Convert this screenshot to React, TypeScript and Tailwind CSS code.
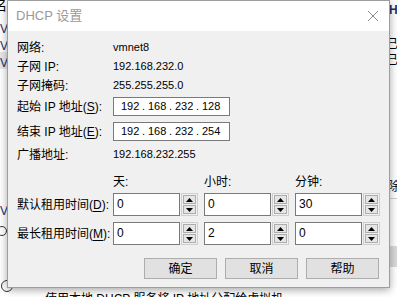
import React from "react";

const FONT = { fontFamily: '"Liberation Sans", "Noto Sans CJK SC", sans-serif' };

function U({ c }: { c: string }) {
  return <span className="underline underline-offset-2">{c}</span>;
}

function Spin({ value }: { value: string }) {
  return (
    <div className="flex h-full w-[85px] gap-[1px]">
      <div className="flex h-full flex-1 items-start border border-[#7a7a7a] bg-white pl-[3px] pt-[3px] text-[12px] leading-[14px]">
        {value}
      </div>
      <div className="flex h-full w-[17px] flex-col gap-[1px] border border-[#cfcfcf] p-[1px]">
        <div className="flex flex-1 items-center justify-center border border-[#adadad] bg-[#e5e5e5]">
          <svg width="7" height="4" viewBox="0 0 7 4">
            <polygon points="0,4 7,4 3.5,0" fill="#000" />
          </svg>
        </div>
        <div className="flex flex-1 items-center justify-center border border-[#adadad] bg-[#e5e5e5]">
          <svg width="7" height="4" viewBox="0 0 7 4">
            <polygon points="0,0 7,0 3.5,4" fill="#000" />
          </svg>
        </div>
      </div>
    </div>
  );
}

function IpBox({ parts }: { parts: string[] }) {
  return (
    <div className="flex h-[19px] w-[117px] items-center border border-[#7a7a7a] bg-white pl-[7px] text-[11px]">
      {parts.map((p, i) => (
        <React.Fragment key={i}>
          <span className="w-[18px]">{p}</span>
          {i < 3 && <span className="w-[9px] text-center">.</span>}
        </React.Fragment>
      ))}
    </div>
  );
}

function Btn({ label }: { label: string }) {
  return (
    <div className="flex h-[21px] w-[73px] items-center justify-center border border-[#adadad] bg-[#e1e1e1] text-[12px]">
      {label}
    </div>
  );
}

export default function App() {
  return (
    <div className="relative h-[297px] w-[397px] overflow-hidden bg-white text-black" style={FONT}>
      {/* background window fragments */}
      <div className="absolute left-0 top-[52px] h-[17px] w-[8px] bg-[#e8e8e8]" />
      <div className="absolute left-[-6px] top-[-4px] text-[13px]">名</div>
      <div className="absolute left-0 top-[20px] text-[12px] text-[#1b2f6b]">V</div>
      <div className="absolute left-0 top-[37px] text-[12px] text-[#1b2f6b]">V</div>
      <div className="absolute left-0 top-[54px] text-[12px] text-[#1b2f6b]">V</div>
      <div className="absolute left-0 top-[202px] text-[12px] text-[#1b2f6b]">V</div>
      <div className="absolute left-[-3px] top-[226px] h-[10px] w-[10px] rounded-full border border-[#333]" />
      <div className="absolute left-[1px] top-[280px] h-[12px] w-[12px] rounded-full border border-[#333]" />
      <div className="absolute left-[45px] top-[290px] whitespace-nowrap text-[12px]">使用本地 DHCP 服务将 IP 地址分配给虚拟机</div>
      <div className="absolute left-[389px] top-[1px] text-[12px] font-bold text-[#1b2f6b]">H</div>
      <div className="absolute left-[386px] top-[35px] text-[12px]">已/</div>
      <div className="absolute left-[386px] top-[51px] text-[12px]">已/</div>
      <div className="absolute left-[388px] top-[178px] h-[21px] w-[12px] border-b border-[#cfcfcf] text-[12px]">除</div>
      <div className="absolute left-[388px] top-[246px] h-[21px] w-[12px] bg-[#dadada]" />

      {/* dialog */}
      <div className="absolute left-[7px] top-0 flex h-[288px] w-[383px] flex-col border border-[#9d9d9d] bg-[#f0f0f0] shadow-[0_2px_8px_rgba(0,0,0,0.35)]">
        <div className="flex h-[30px] items-center justify-between bg-white pl-[8px] pr-[9px]">
          <span className="text-[13px] text-[#9a9a9a]">DHCP 设置</span>
          <svg width="12" height="12" viewBox="0 0 12 12" className="mr-[1px]">
            <path d="M1 1 L11 11 M11 1 L1 11" stroke="#8a8a8a" strokeWidth="1" />
          </svg>
        </div>

        <div className="flex flex-col pl-[9px] pr-[9px] pt-[7px] text-[12px]">
          <div className="flex h-[19px] items-center">
            <span className="w-[96px]">网络:</span>
            <span className="text-[11px]">vmnet8</span>
          </div>
          <div className="flex h-[19px] items-center">
            <span className="w-[96px]">子网 IP:</span>
            <span className="text-[11px]">192.168.232.0</span>
          </div>
          <div className="flex h-[19px] items-center">
            <span className="w-[96px]">子网掩码:</span>
            <span className="text-[11px]">255.255.255.0</span>
          </div>
          <div className="mt-[2px] flex h-[19px] items-center">
            <span className="w-[96px]">
              起始 IP 地址(<U c="S" />):
            </span>
            <IpBox parts={["192", "168", "232", "128"]} />
          </div>
          <div className="mt-[6px] flex h-[19px] items-center">
            <span className="w-[96px]">
              结束 IP 地址(<U c="E" />):
            </span>
            <IpBox parts={["192", "168", "232", "254"]} />
          </div>
          <div className="mt-[4px] flex h-[19px] items-center">
            <span className="w-[96px]">广播地址:</span>
            <span className="text-[11px]">192.168.232.255</span>
          </div>
          <div className="mt-[9px] flex h-[18px] items-center">
            <span className="w-[96px]" />
            <div className="flex gap-[6px]">
              <span className="w-[85px]">天:</span>
              <span className="w-[85px]">小时:</span>
              <span className="w-[85px]">分钟:</span>
            </div>
          </div>
          <div className="mt-[2px] flex h-[23px] items-center">
            <span className="w-[96px]">
              默认租用时间(<U c="D" />):
            </span>
            <div className="flex h-full gap-[6px]">
              <Spin value="0" />
              <Spin value="0" />
              <Spin value="30" />
            </div>
          </div>
          <div className="mt-[6px] flex h-[23px] items-center">
            <span className="w-[96px]">
              最长租用时间(<U c="M" />):
            </span>
            <div className="flex h-full gap-[6px]">
              <Spin value="0" />
              <Spin value="2" />
              <Spin value="0" />
            </div>
          </div>
          <div className="mt-[13px] flex justify-end gap-[8px] pr-[1px]">
            <Btn label="确定" />
            <Btn label="取消" />
            <Btn label="帮助" />
          </div>
        </div>
      </div>
    </div>
  );
}
